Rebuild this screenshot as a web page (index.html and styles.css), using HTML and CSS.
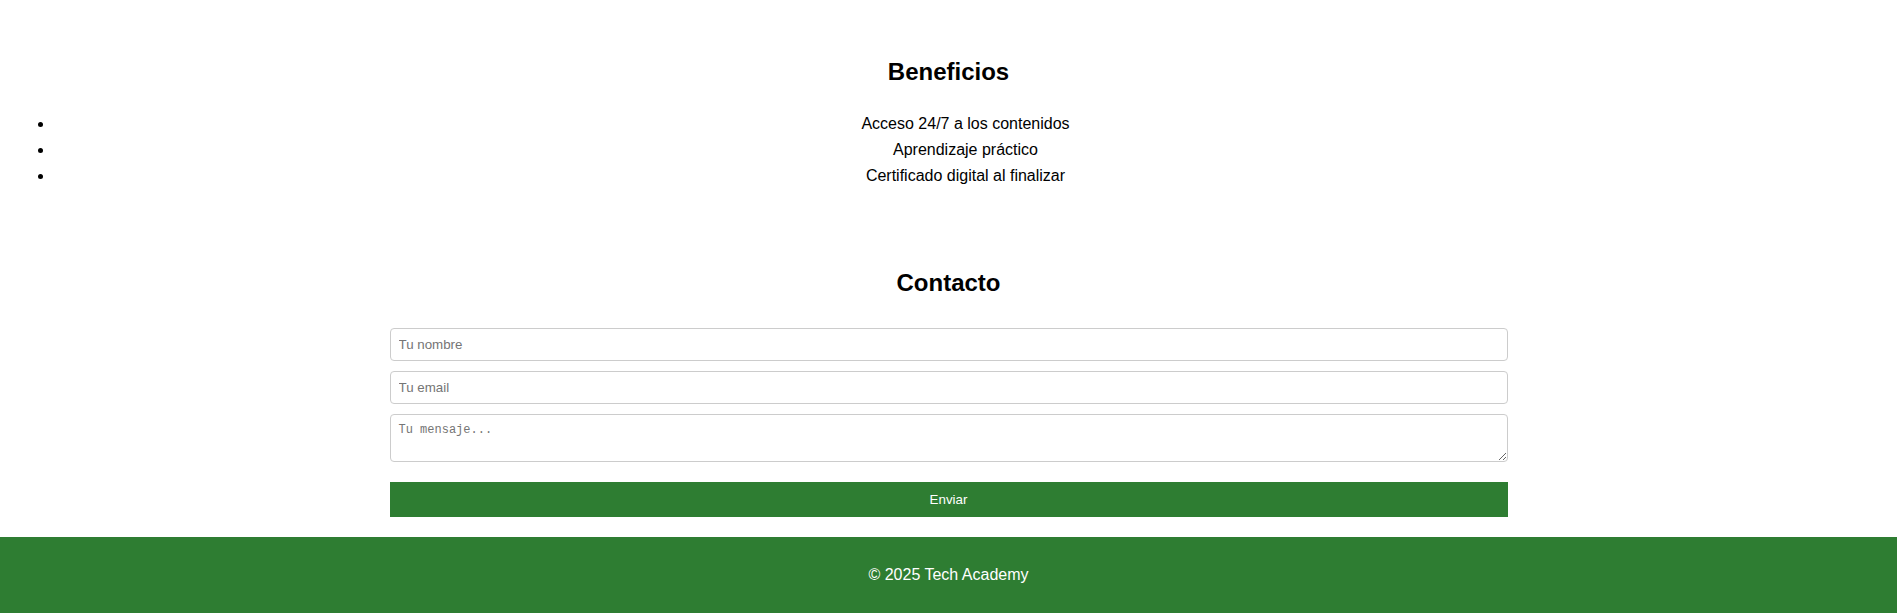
FILE: index.html
```html
<!DOCTYPE html>
<html lang="es">
<head>
<meta charset="utf-8">
<title>Tech Academy</title>
<link rel="stylesheet" href="styles.css">
</head>
<body>
  <section class="section benefits">
    <h2>Beneficios</h2>
    <ul class="benefit-list">
      <li>Acceso 24/7 a los contenidos</li>
      <li>Aprendizaje práctico</li>
      <li>Certificado digital al finalizar</li>
    </ul>
  </section>
  <section class="section contact">
    <h2>Contacto</h2>
    <form class="contact-form">
      <input class="field" type="text" placeholder="Tu nombre">
      <input class="field" type="email" placeholder="Tu email">
      <textarea class="field field-area" placeholder="Tu mensaje..."></textarea>
      <button class="submit" type="button">Enviar</button>
    </form>
  </section>
  <footer class="footer">
    <p>© 2025 Tech Academy</p>
  </footer>
</body>
</html>
```
FILE: styles.css
```css
* { box-sizing: border-box; }
html, body {
  margin: 0;
  padding: 0;
  background: #fff;
}
body {
  font-family: "Liberation Sans", Arial, sans-serif;
  font-size: 16px;
  line-height: 1.6;
  color: #000;
}
.section {
  padding: 20px;
  text-align: center;
}
.benefits {
  padding-top: 33px;
}
.section h2 {
  font-size: 24px;
  font-weight: bold;
  margin: 20px 0;
}
.benefit-list {
  margin: 20px 0 15px;
  padding-left: 34px;
}
.contact h2 {
  margin-top: 21px;
  margin-bottom: 25px;
}
.contact-form {
  max-width: 1118px;
  margin: 0 auto;
  display: flex;
  flex-direction: column;
  gap: 10px;
}
.field {
  display: block;
  width: 100%;
  padding: 8px;
  border: 1px solid #ccc;
  border-radius: 4px;
  font-family: "Liberation Sans", Arial, sans-serif;
  font-size: 13.33px;
  line-height: 15px;
  height: 33px;
  color: #000;
  background: #fff;
}
.field::placeholder {
  color: #757575;
}
.field-area {
  height: 48px;
  font-family: "Liberation Mono", monospace;
  font-size: 12px;
  line-height: 15px;
  resize: vertical;
}
.submit {
  margin-top: 10px;
  height: 35px;
  padding: 10px;
  border: none;
  background: #2e7d32;
  color: #fff;
  font-family: "Liberation Sans", Arial, sans-serif;
  font-size: 13.33px;
  line-height: 15px;
  cursor: pointer;
}
.footer {
  background: #2e7d32;
  color: #fff;
  text-align: center;
  padding: 25px 0 26px;
}
.footer p {
  margin: 0;
}
```
